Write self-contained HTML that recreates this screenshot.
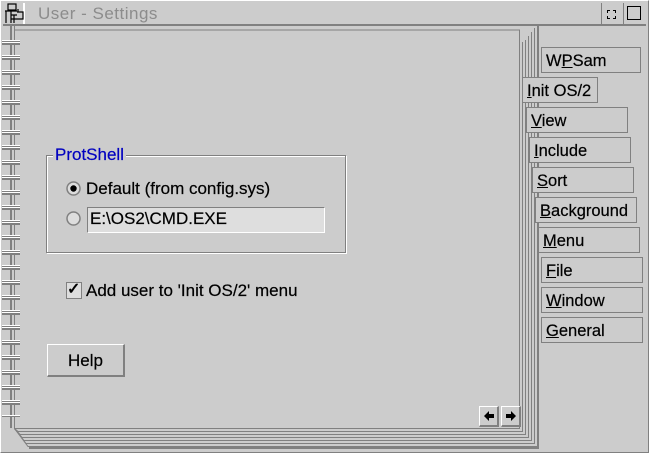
<!DOCTYPE html>
<html><head><style>
body{margin:0;width:649px;height:453px;background:#cccccc;font-family:"Liberation Sans",sans-serif;position:relative;overflow:hidden}
.a{position:absolute}
.frame{left:0;top:0;width:647px;height:451px;border-top:1px solid #fff;border-left:1px solid #fff;border-right:1px solid #808080;border-bottom:1px solid #808080}
.tab{position:absolute;height:26px;border:1px solid #808080;background:#cccccc;font-size:16.5px;line-height:26px;padding-left:4px;box-sizing:border-box;color:#000;-webkit-text-stroke:0.2px #000}
.t{font-size:17px;-webkit-text-stroke:0.2px #000}
.btn{border-top:1px solid #fff;border-left:1px solid #fff;border-right:2px solid #808080;border-bottom:2px solid #808080;box-sizing:border-box;background:#cccccc}
u{text-decoration:underline}
</style></head><body>
<div class="a frame"></div>
<div class="a" style="left:3px;top:3px;width:20px;height:21px;background:#cccccc;border-right:1px solid #fff"></div>
<svg class="a" style="left:4px;top:3px" width="20" height="22"><g stroke="#000" fill="none" stroke-width="1.2"><rect x="4" y="1" width="8" height="6"/><path d="M1 8h12M2 8v12M7 8v12M7 12h6M7 16h6M10 12v8M13 9h6v7h-6M14 6v3"/></g></svg>
<div class="a" style="left:24px;top:3px;width:577px;height:21px;border-left:1px solid #fff"></div>
<div class="a" style="left:38px;top:4px;font-size:17px;color:#8c8c8c;letter-spacing:0.5px">User - Settings</div>
<div class="a" style="left:3px;top:24px;width:643px;height:2px;background:#808080"></div>
<div class="a" style="left:601px;top:3px;width:21px;height:21px;border-left:1px solid #808080;border-right:1px solid #fff"></div>
<div class="a" style="left:607px;top:10px;width:7px;height:7px;border:1px dashed #000"></div>
<div class="a" style="left:623px;top:3px;width:21px;height:21px;border-left:1px solid #808080"></div>
<div class="a" style="left:627px;top:6px;width:12px;height:12px;border:1.5px solid #000"></div>
<svg class="a" style="left:0;top:26px" width="649" height="427">
<g fill="none" stroke="#808080" stroke-width="1">
<path d="M14.5 402.5 L28 420.5 H537.5 V0"/>
<path d="M14.5 402.5 L26 417.5 H534.5 V2"/>
<path d="M14.5 402.5 L24 414.5 H531.5 V6"/>
<path d="M14.5 402.5 L22 411.5 H528.5 V10"/>
<path d="M14.5 402.5 L20 408.5 H525.5 V14"/>
<path d="M14.5 402.5 L18 405.5 H522.5 V16"/>
<path d="M14.5 0 V402.5 H519.5 V4 H14.5"/>
</g>
<path d="M538 0V422H29" stroke="#808080" stroke-width="2" fill="none"/>
</svg>
<div class="a" style="left:10px;top:26px;width:2px;height:402px;background:#808080"></div>
<div class="a" style="left:2px;top:37px;width:18px;height:380px;background:repeating-linear-gradient(to bottom,transparent 0,transparent 3px,#fff 3px,#fff 4px,#808080 4px,#808080 5px,#fff 5px,#fff 6px,#808080 6px,#808080 8px,transparent 8px,transparent 15px)"></div>
<div class="tab" style="left:541px;top:47px;width:100px">W<u>P</u>Sam</div>
<div class="tab" style="left:522px;top:77px;width:76px"><u>I</u>nit OS/2</div>
<div class="tab" style="left:526px;top:107px;width:102px"><u>V</u>iew</div>
<div class="tab" style="left:529px;top:137px;width:102px"><u>I</u>nclude</div>
<div class="tab" style="left:532px;top:167px;width:102px"><u>S</u>ort</div>
<div class="tab" style="left:535px;top:197px;width:102px"><u>B</u>ackground</div>
<div class="tab" style="left:538px;top:227px;width:102px"><u>M</u>enu</div>
<div class="tab" style="left:541px;top:257px;width:102px"><u>F</u>ile</div>
<div class="tab" style="left:541px;top:287px;width:102px"><u>W</u>indow</div>
<div class="tab" style="left:541px;top:317px;width:102px"><u>G</u>eneral</div>
<div class="a" style="left:46px;top:155px;width:298px;height:96px;border:1px solid #808080;box-shadow:1px 1px 0 #fff, inset 1px 1px 0 #fff"></div>
<div class="a t" style="left:53px;top:145px;background:#cccccc;padding:0 2px;color:#0000c0;-webkit-text-stroke:0.2px #0000c0">ProtShell</div>
<svg class="a" style="left:66px;top:181px" width="16" height="16"><circle cx="7.5" cy="7.5" r="6.5" fill="#ddd" stroke="#808080" stroke-width="1.5"/><circle cx="7.5" cy="7.5" r="3.2" fill="#000"/></svg>
<div class="a t" style="left:86px;top:179px">Default (from config.sys)</div>
<svg class="a" style="left:66px;top:211px" width="16" height="16"><circle cx="7.5" cy="7.5" r="6.5" fill="#ddd" stroke="#808080" stroke-width="1.5"/></svg>
<div class="a" style="left:87px;top:207px;width:236px;height:24px;background:#dedede;border:1px solid #808080;border-right-color:#fff;border-bottom-color:#fff"></div>
<div class="a t" style="left:90px;top:209px">E:\OS2\CMD.EXE</div>
<div class="a" style="left:66px;top:282px;width:14px;height:15px;background:#ddd;border:1px solid #808080"></div>
<div class="a" style="left:67px;top:279px;font-size:16px;font-weight:bold">✓</div>
<div class="a t" style="left:86px;top:281px">Add user to 'Init OS/2' menu</div>
<div class="a btn t" style="left:47px;top:344px;width:78px;height:33px;text-align:center;line-height:31px">Help</div>
<div class="a btn" style="left:479px;top:406px;width:20px;height:21px"></div>
<svg class="a" style="left:482px;top:410px" width="14" height="12"><path d="M2 6L7 1V4H12V8H7V11Z" fill="#000"/></svg>
<div class="a btn" style="left:501px;top:406px;width:20px;height:21px"></div>
<svg class="a" style="left:504px;top:410px" width="14" height="12"><path d="M12 6L7 1V4H2V8H7V11Z" fill="#000"/></svg>
</body></html>
